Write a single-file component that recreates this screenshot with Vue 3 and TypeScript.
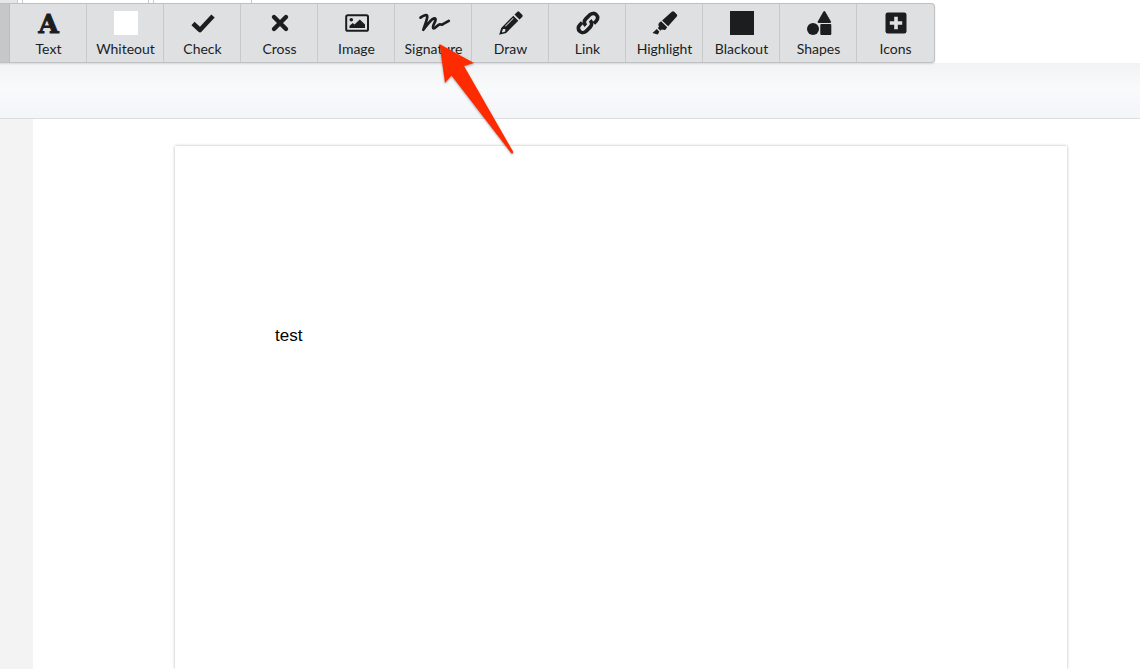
<script setup lang="ts">
import { ref } from 'vue'

interface Tool {
  id: string
  label: string
}

const tools: Tool[] = [
  { id: 'text', label: 'Text' },
  { id: 'whiteout', label: 'Whiteout' },
  { id: 'check', label: 'Check' },
  { id: 'cross', label: 'Cross' },
  { id: 'image', label: 'Image' },
  { id: 'signature', label: 'Signature' },
  { id: 'draw', label: 'Draw' },
  { id: 'link', label: 'Link' },
  { id: 'highlight', label: 'Highlight' },
  { id: 'blackout', label: 'Blackout' },
  { id: 'shapes', label: 'Shapes' },
  { id: 'icons', label: 'Icons' },
]

const selected = ref('select')
</script>

<template>
  <div class="editor">
    <div class="tabs">
      <span class="tab tab-current"></span>
      <span class="tab tab-wide"></span>
      <span class="tab tab-last"></span>
    </div>
    <nav class="toolbar" aria-label="Editing tools">
      <button class="edge" type="button" aria-label="Select" @click="selected = 'select'"></button>
      <button
        v-for="tool in tools"
        :key="tool.id"
        class="tool"
        :class="{ chosen: selected === tool.id }"
        type="button"
        @click="selected = tool.id"
      >
        <span v-if="tool.id === 'text'" class="glyph" aria-hidden="true">A</span>
        <svg v-else class="icon" viewBox="0 0 24 24" aria-hidden="true">
          <rect v-if="tool.id === 'whiteout'" width="24" height="24" fill="#fff" />
          <path v-else-if="tool.id === 'check'" d="M2 12.5 L9 19 L22 5" class="line" stroke-width="4.6" />
          <path v-else-if="tool.id === 'cross'" d="M6 6 L18 18 M18 6 L6 18" class="line" stroke-width="4.4" stroke-linecap="round" />
          <g v-else-if="tool.id === 'image'">
            <rect x="1.2" y="4.2" width="21.8" height="15.6" rx="1.6" class="line" stroke-width="2" />
            <circle cx="6.3" cy="8.7" r="1.8" />
            <path d="M4.5 17 V14.8 L7.8 12 L9.5 13.6 L14.8 8.6 L20 13.6 V17 Z" />
          </g>
          <path
            v-else-if="tool.id === 'signature'"
            d="M-1.5 6.6 C.5 5 4.6 3 5.2 5 C5.8 7.5 3 13.5 1.3 18.8 C4.5 14.5 8.6 8.6 11.6 7.6 C13.6 7 14 8.3 13.2 10.2 C12.4 12.2 10.2 15.6 11.2 17 C12.6 18.6 15.4 13.8 17.8 13.4 C18.8 13.3 19.4 13.9 20.5 13.4 L26.8 9.8"
            class="line"
            stroke-width="2.7"
            stroke-linecap="round"
          />
          <g v-else-if="tool.id === 'draw'">
            <path d="M18.2 .9 Q19.3 -.2 20.4 .9 L23.2 3.7 Q24.3 4.8 23.2 5.9 L20.5 8.6 L15.5 3.6 Z" />
            <path fill-rule="evenodd" d="M14.3 4.8 L19.3 9.8 L7.2 21.9 L.2 23.8 L2.2 16.9 Z M4 18 L2.9 21 L3.4 21.4 L6.3 20.4 V18 Z M6.6 15.6 L14.6 7.6 L14 7 L6 15 Z" />
          </g>
          <g v-else-if="tool.id === 'link'" class="line" stroke-width="3.7" stroke-linecap="butt">
            <path d="M14.1 9.4 C16.1 11.4 16.1 14.2 14.2 16.1 L10.1 20.2 C8.4 21.9 5.4 22 3.7 20.3 C1.9 18.5 1.9 15.8 3.7 14 L6.2 11.5" />
            <path d="M9.9 14.6 C7.9 12.6 7.9 9.8 9.8 7.9 L13.9 3.8 C15.6 2.1 18.6 2 20.3 3.7 C22.1 5.5 22.1 8.2 20.3 10 L17.8 12.5" />
          </g>
          <g v-else-if="tool.id === 'highlight'">
            <path d="M9.1 9.4 L18.8 .7 Q20 -.3 21.2 .8 L23.7 3.3 Q24.8 4.4 23.8 5.6 L15.1 15.3 Z" />
            <path d="M8.1 10.2 L14.2 16.3 L12.6 18.4 Q11.8 19.2 10.5 18.8 L8.7 18.4 L7.4 19.7 L4.8 17.1 L6 15.8 L5.4 13.9 Q5.2 12.7 6 11.9 Z" />
            <path d="M3.8 18.1 L6.4 20.7 L4.7 23.4 L-.5 22 Z" />
          </g>
          <rect v-else-if="tool.id === 'blackout'" width="24" height="24" />
          <g v-else-if="tool.id === 'shapes'">
            <path d="M16.3 .8 Q17.3 -.6 18.3 .8 L23.8 10.2 Q24.6 12 23 12 H11.7 Q10.1 12 10.9 10.2 Z" />
            <circle cx="6" cy="18" r="6" />
            <rect x="13.3" y="13" width="11" height="11" rx="1" />
          </g>
          <g v-else>
            <rect x="1.5" y="1.5" width="21" height="21" rx="2.2" />
            <path d="M10.2 5.8 H13.8 V10.2 H18.2 V13.8 H13.8 V18.2 H10.2 V13.8 H5.8 V10.2 H10.2 Z" fill="#dfe0e2" />
          </g>
        </svg>
        <span>{{ tool.label }}</span>
      </button>
    </nav>
    <header class="banner"></header>
    <div class="workspace">
      <aside class="side"></aside>
      <main class="canvas">
        <article class="sheet">
          <p class="note">test</p>
        </article>
      </main>
    </div>
    <svg class="pointer" viewBox="0 0 86 120" aria-hidden="true">
      <path d="M9.5 4 L44 23 L34 26 L83 111.5 Q83.6 114 81.5 113.5 L21.5 35.5 L15 43 Z" />
    </svg>
  </div>
</template>

<style>
body {
  margin: 0;
}
</style>

<style scoped>
.editor {
  position: relative;
  display: flex;
  flex-direction: column;
  min-height: 100vh;
  overflow: hidden;
  background: #fff;
  font-family: Lato, "Liberation Sans", sans-serif;
  color: #1b1d1f;
}

.tabs {
  display: flex;
  gap: 4px;
  height: 3px;
}

.tab {
  box-sizing: border-box;
  border-right: 1px solid #c9cacc;
}

.tab-current {
  width: 18px;
  background: #e6e7e8;
}

.tab-wide {
  width: 127px;
  border-left: 1px solid #c9cacc;
}

.tab-last {
  width: 99px;
  border-left: 1px solid #c9cacc;
}

.toolbar {
  position: relative;
  display: flex;
  align-self: flex-start;
  box-sizing: border-box;
  height: 60px;
  border: solid #bfc0c2;
  border-width: 1px 1px 1px 0;
  border-radius: 0 4px 4px 0;
  background: #dfe0e2;
  box-shadow: 0 1px 2px rgba(0, 0, 0, 0.12);
}

.edge {
  width: 10px;
  padding: 0;
  border: 0;
  border-right: 1px solid #bbbcbe;
  background: #c6c7c9;
}

.tool {
  display: flex;
  flex-direction: column;
  align-items: center;
  gap: 4px;
  box-sizing: border-box;
  width: 77px;
  padding: 7px 0 0 1px;
  border: 0;
  border-right: 1px solid #c8c9cb;
  background: transparent;
  color: inherit;
  font: 14px/20px Lato, "Liberation Sans", sans-serif;
  cursor: pointer;
}

.tool:last-child {
  border-right-color: transparent;
}

.tool.chosen {
  background: #c6c7c9;
}

.icon {
  flex: none;
  width: 24px;
  height: 24px;
  overflow: visible;
  fill: #1b1d1f;
}

.line {
  fill: none;
  stroke: #1b1d1f;
  stroke-linejoin: round;
}

.glyph {
  height: 24px;
  font: bold 26px/26px "DejaVu Serif", serif;
  -webkit-text-stroke: 1px #1b1d1f;
}

.banner {
  box-sizing: border-box;
  height: 56px;
  border-bottom: 1px solid #dcdddf;
  background: linear-gradient(#f2f3f4, #f8fafc 45%, #f4f5f8);
}

.workspace {
  display: flex;
  flex: 1;
}

.side {
  width: 33px;
  background: #f3f3f3;
}

.canvas {
  display: flex;
  flex: 1;
  padding: 27px 73px 0 142px;
}

.sheet {
  flex: 1;
  padding: 180px 100px 0;
  background: #fff;
  box-shadow: 0 0 3px rgba(0, 0, 0, 0.28);
}

.note {
  margin: 0;
  color: #000;
  font: 17px/20px "Liberation Sans", Arial, sans-serif;
}

.pointer {
  position: absolute;
  top: 40px;
  left: 430px;
  width: 86px;
  height: 120px;
  fill: #ff2b00;
  pointer-events: none;
  filter: drop-shadow(0 1px 1px rgba(0, 0, 0, 0.35));
}
</style>
